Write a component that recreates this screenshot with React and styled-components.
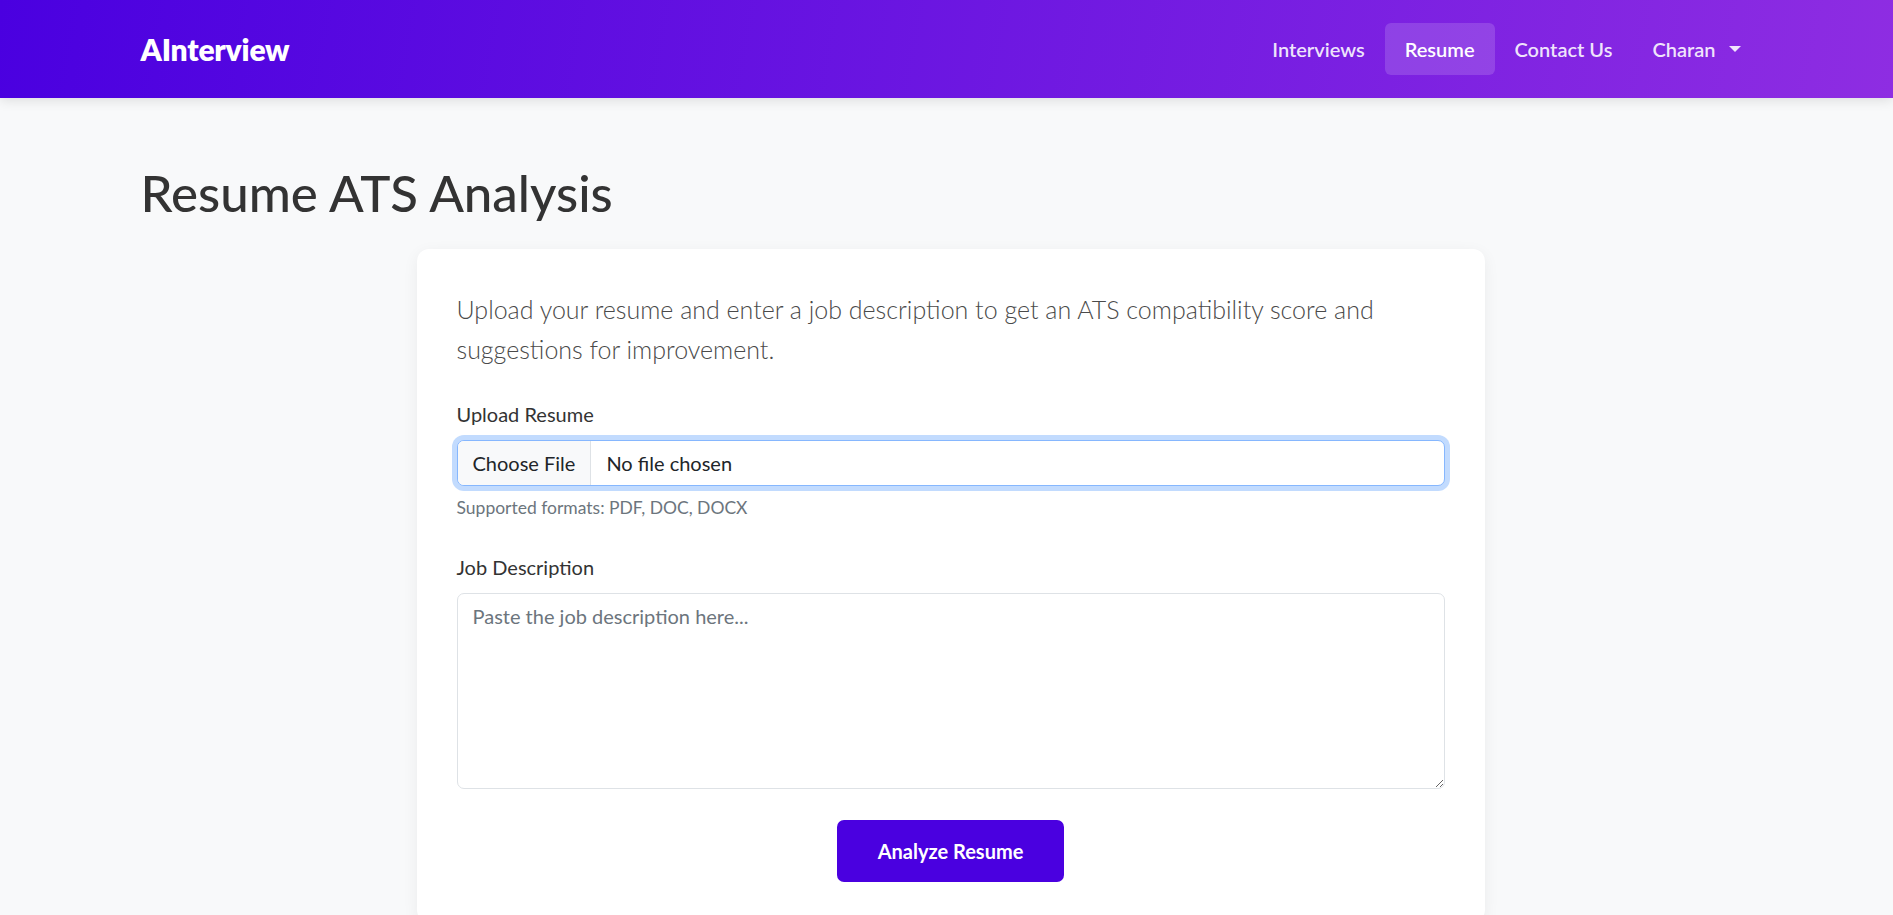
import React from 'react'
import styled, { createGlobalStyle } from 'styled-components'

const GlobalStyle = createGlobalStyle`
  * {
    box-sizing: border-box;
  }
  body {
    margin: 0;
    background: #f8f9fa;
    color: #333;
    font-family: Lato, "Open Sans", "Liberation Sans", sans-serif;
    font-size: 20px;
    line-height: 1.5;
  }
`

const Navbar = () => (
  <StyledNav>
    <NavInner>
      <Brand href="#">AInterview</Brand>
      <NavList>
        <NavItem>Interviews</NavItem>
        <NavItem $active>Resume</NavItem>
        <NavItem>Contact Us</NavItem>
        <NavItem $dropdown>Charan</NavItem>
      </NavList>
    </NavInner>
  </StyledNav>
)

const App = () => {
  return (
    <>
      <GlobalStyle />
      <Navbar />
      <Page>
        <Title>Resume ATS Analysis</Title>
        <Card>
          <Lead>
            Upload your resume and enter a job description to get an ATS
            compatibility score and suggestions for improvement.
          </Lead>
          <FormGroup>
            <Label htmlFor="resume">Upload Resume</Label>
            <FileInput id="resume" type="file" accept=".pdf,.doc,.docx" />
            <FormText>Supported formats: PDF, DOC, DOCX</FormText>
          </FormGroup>
          <FormGroup>
            <Label htmlFor="jd">Job Description</Label>
            <TextArea
              id="jd"
              rows={6}
              placeholder="Paste the job description here..."
            />
          </FormGroup>
          <Actions>
            <PrimaryButton type="button">Analyze Resume</PrimaryButton>
          </Actions>
        </Card>
      </Page>
    </>
  )
}

const StyledNav = styled.header`
  height: 98px;
  background: linear-gradient(100deg, #4a00e0 0%, #8e2de2 100%);
  box-shadow: 0 2px 12px rgba(0, 0, 0, 0.12);
  position: relative;
  z-index: 1;
`

const NavInner = styled.div`
  max-width: 1650px;
  height: 100%;
  margin: 0 auto;
  padding: 0 11px 0 19px;
  display: flex;
  align-items: center;
  justify-content: space-between;
`

const Brand = styled.a`
  color: #fff;
  font-size: 30px;
  font-weight: 800;
  text-decoration: none;
  letter-spacing: -0.2px;
`

const NavList = styled.nav`
  display: flex;
  align-items: center;
`

const NavItem = styled.a`
  display: flex;
  align-items: center;
  height: 52px;
  padding: 0 20px;
  border-radius: 6px;
  color: ${(p) => (p.$active ? '#fff' : 'rgba(255, 255, 255, 0.88)')};
  background: ${(p) => (p.$active ? 'rgba(255, 255, 255, 0.15)' : 'transparent')};
  font-size: 20px;
  font-weight: 600;
  cursor: pointer;

  &::after {
    content: ${(p) => (p.$dropdown ? "''" : 'none')};
    display: inline-block;
    margin-left: 13px;
    border-top: 6px solid rgba(255, 255, 255, 0.88);
    border-left: 6px solid transparent;
    border-right: 6px solid transparent;
  }
`

const Page = styled.main`
  max-width: 1650px;
  margin: 0 auto;
  padding: 64px 11px 0 19px;
`

const Title = styled.h1`
  margin: 0 0 26px;
  font-size: 51px;
  font-weight: 500;
  line-height: 1.2;
  color: #333;
`

const Card = styled.section`
  max-width: 1068px;
  margin: 0 auto;
  padding: 40px;
  background: #fff;
  border-radius: 12px;
  box-shadow: 0 4px 16px rgba(0, 0, 0, 0.06);
`

const Lead = styled.p`
  margin: 0 0 30px;
  font-size: 25px;
  font-weight: 300;
  line-height: 1.6;
  color: #4a4a4a;
`

const FormGroup = styled.div`
  margin-bottom: 31px;
`

const Label = styled.label`
  display: block;
  margin-bottom: 11px;
  font-size: 20px;
  color: #333;
`

const FileInput = styled.input`
  display: block;
  width: 100%;
  height: 46px;
  padding: 7px 15px;
  font: inherit;
  font-size: 20px;
  line-height: 1.5;
  color: #212529;
  background: #fff;
  border: 1px solid #86b7fe;
  border-radius: 7px;
  box-shadow: 0 0 0 5px rgba(13, 110, 253, 0.25);
  overflow: hidden;
  outline: none;

  &::file-selector-button {
    height: 46px;
    padding: 7px 15px;
    margin: -8px 15px -8px -15px;
    font: inherit;
    color: #212529;
    background: #f8f9fa;
    border: 0;
    border-right: 1px solid #dee2e6;
    border-radius: 0;
  }
`

const FormText = styled.div`
  margin-top: 9px;
  font-size: 17.5px;
  color: #6c757d;
`

const TextArea = styled.textarea`
  display: block;
  width: 100%;
  padding: 7px 15px;
  font: inherit;
  font-size: 20px;
  line-height: 1.5;
  color: #212529;
  background: #fff;
  border: 1px solid #dee2e6;
  border-radius: 7px;
  resize: vertical;
  outline: none;

  &::placeholder {
    color: #6c757d;
  }
`

const Actions = styled.div`
  display: flex;
  justify-content: center;
`

const PrimaryButton = styled.button`
  height: 62px;
  padding: 0 41px;
  font: inherit;
  font-size: 20px;
  font-weight: 700;
  color: #fff;
  background: #4a00e0;
  border: 0;
  border-radius: 7px;
  cursor: pointer;
`

export default App
